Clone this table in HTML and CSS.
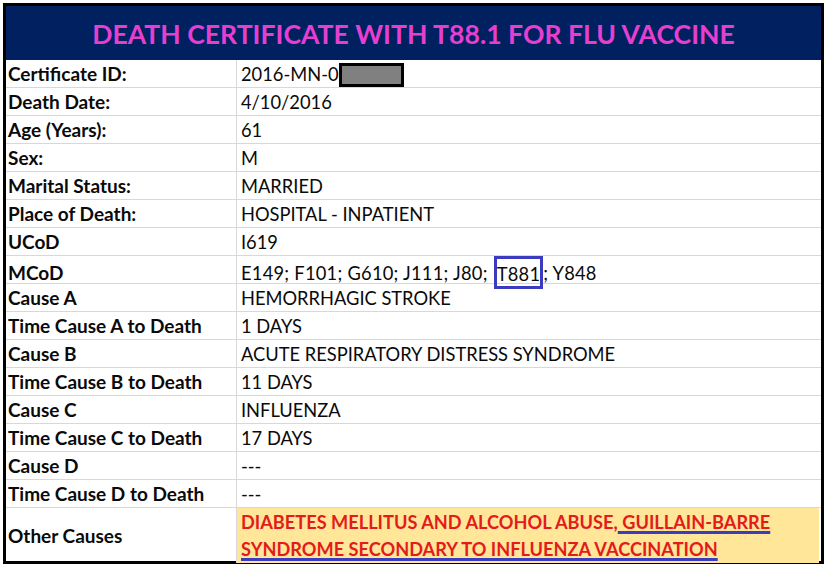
FILE: index.html
```html
<!DOCTYPE html>
<html>
<head>
<meta charset="utf-8">
<link rel="stylesheet" href="styles.css">
</head>
<body>
<div class="sheet">
  <div class="title">DEATH CERTIFICATE WITH T88.1 FOR FLU VACCINE</div>
  <div class="row"><div class="label">Certificate ID:</div><div class="value">2016-MN-0<span class="redact"></span></div></div>
  <div class="row"><div class="label">Death Date:</div><div class="value">4/10/2016</div></div>
  <div class="row"><div class="label">Age (Years):</div><div class="value">61</div></div>
  <div class="row"><div class="label">Sex:</div><div class="value">M</div></div>
  <div class="row"><div class="label">Marital Status:</div><div class="value">MARRIED</div></div>
  <div class="row"><div class="label">Place of Death:</div><div class="value">HOSPITAL - INPATIENT</div></div>
  <div class="row"><div class="label">UCoD</div><div class="value">I619</div></div>
  <div class="row"><div class="label">MCoD</div><div class="value mcod">E149; F101; G610; J111; J80;&nbsp;<span class="boxed">T881</span>; Y848</div></div>
  <div class="row"><div class="label">Cause A</div><div class="value">HEMORRHAGIC STROKE</div></div>
  <div class="row"><div class="label">Time Cause A to Death</div><div class="value">1 DAYS</div></div>
  <div class="row"><div class="label">Cause B</div><div class="value">ACUTE RESPIRATORY DISTRESS SYNDROME</div></div>
  <div class="row"><div class="label">Time Cause B to Death</div><div class="value">11 DAYS</div></div>
  <div class="row"><div class="label">Cause C</div><div class="value">INFLUENZA</div></div>
  <div class="row"><div class="label">Time Cause C to Death</div><div class="value">17 DAYS</div></div>
  <div class="row"><div class="label">Cause D</div><div class="value">---</div></div>
  <div class="row"><div class="label">Time Cause D to Death</div><div class="value">---</div></div>
  <div class="row last"><div class="label">Other Causes</div><div class="value other">DIABETES MELLITUS AND ALCOHOL ABUSE,<span class="ul"> GUILLAIN-BARRE</span><br><span class="ul">SYNDROME SECONDARY TO INFLUENZA VACCINATION</span></div></div>
</div>
</body>
</html>
```
FILE: styles.css
```css
html, body {
  margin: 0;
  padding: 0;
  background: #fff;
}
body {
  font-family: Lato, "Open Sans", sans-serif;
  color: #0a0a0a;
}
.sheet {
  margin: 3px 0 0 3px;
  width: 815px;
  border: 3px solid #000;
  display: flex;
  flex-direction: column;
}
.title {
  height: 54px;
  background: #002060;
  color: #E63FCF;
  font-weight: 700;
  font-size: 26.6px;
  display: flex;
  align-items: center;
  justify-content: center;
  padding-top: 1px;
  box-sizing: border-box;
}
.row {
  display: grid;
  grid-template-columns: 231px 1fr;
  height: 28px;
  box-sizing: border-box;
  border-bottom: 1px solid #d8d8d8;
}
.row.last {
  height: 53px;
  border-bottom: none;
}
.label {
  font-weight: 700;
  font-size: 19px;
  padding-left: 2px;
  border-right: 1px solid #d8d8d8;
  display: flex;
  align-items: center;
}
.value {
  font-size: 18.3px;
  padding-left: 4px;
  display: flex;
  align-items: center;
  white-space: nowrap;
}
.mcod {
  letter-spacing: 0.25px;
}
.redact {
  display: inline-block;
  width: 59px;
  height: 18px;
  background: #808080;
  border: 3px solid #000;
  margin-top: 3px;
}
.boxed {
  border: 3px solid #3b3bc0;
  padding: 4px 0 1px 0;
  margin-left: 1px;
}
.other {
  display: block;
  background: #FFE699;
  color: #E31B1B;
  font-weight: 700;
  font-size: 18.2px;
  line-height: 27px;
  padding-top: 1px;
  white-space: nowrap;
  margin-right: 2px;
}
.ul {
  text-decoration: underline;
  text-decoration-color: #3c3cc0;
  text-decoration-thickness: 3px;
  text-underline-offset: 2px;
}
```
